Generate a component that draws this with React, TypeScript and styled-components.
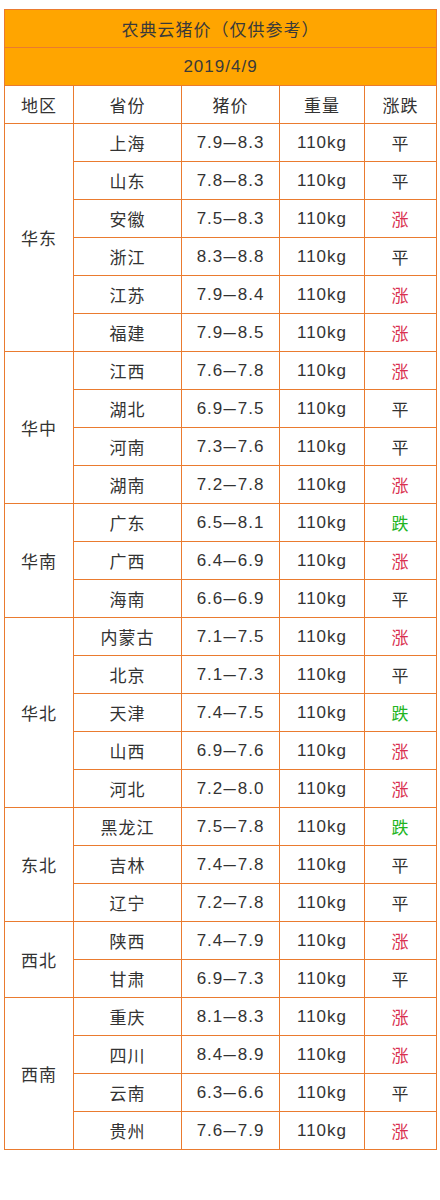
import React from "react";
import styled, { createGlobalStyle } from "styled-components";

const GlobalStyle = createGlobalStyle`
  html, body {
    margin: 0;
    padding: 0;
    background: #ffffff;
  }
  body {
    font-family: "Liberation Sans", "Noto Sans CJK SC", sans-serif;
    color: #333333;
  }
`;

const Page = styled.div`
  padding: 9px 4px 40px 4px;
`;

const PriceTable = styled.table`
  width: 432px;
  table-layout: fixed;
  border-collapse: collapse;
  border: 1px solid #ea7b2f;
  font-size: 17px;
  letter-spacing: 1px;
`;

const TitleCell = styled.td`
  height: 37px;
  padding: 0;
  text-align: center;
  background: #ffa500;
  border: 1px solid #ea7b2f;
  color: #3a3a3a;
`;

const HeadCell = styled.td`
  height: 37px;
  padding: 0;
  text-align: center;
  border: 1px solid #ea7b2f;
`;

const Cell = styled.td`
  height: 37px;
  padding: 0;
  text-align: center;
  border: 1px solid #ea7b2f;
`;

const Dash = styled.span`
  display: inline-block;
  margin: 0 2px;
  transform: scaleX(1.3);
`;

const Trend = styled(Cell)<{ tone: string }>`
  color: ${(p) => (p.tone === "涨" ? "#d9304f" : p.tone === "跌" ? "#22b51f" : "#333333")};
`;

type Row = [string, string, string];

const regions: { name: string; rows: Row[] }[] = [
  {
    name: "华东",
    rows: [
      ["上海", "7.9–8.3", "平"],
      ["山东", "7.8–8.3", "平"],
      ["安徽", "7.5–8.3", "涨"],
      ["浙江", "8.3–8.8", "平"],
      ["江苏", "7.9–8.4", "涨"],
      ["福建", "7.9–8.5", "涨"],
    ],
  },
  {
    name: "华中",
    rows: [
      ["江西", "7.6–7.8", "涨"],
      ["湖北", "6.9–7.5", "平"],
      ["河南", "7.3–7.6", "平"],
      ["湖南", "7.2–7.8", "涨"],
    ],
  },
  {
    name: "华南",
    rows: [
      ["广东", "6.5–8.1", "跌"],
      ["广西", "6.4–6.9", "涨"],
      ["海南", "6.6–6.9", "平"],
    ],
  },
  {
    name: "华北",
    rows: [
      ["内蒙古", "7.1–7.5", "涨"],
      ["北京", "7.1–7.3", "平"],
      ["天津", "7.4–7.5", "跌"],
      ["山西", "6.9–7.6", "涨"],
      ["河北", "7.2–8.0", "涨"],
    ],
  },
  {
    name: "东北",
    rows: [
      ["黑龙江", "7.5–7.8", "跌"],
      ["吉林", "7.4–7.8", "平"],
      ["辽宁", "7.2–7.8", "平"],
    ],
  },
  {
    name: "西北",
    rows: [
      ["陕西", "7.4–7.9", "涨"],
      ["甘肃", "6.9–7.3", "平"],
    ],
  },
  {
    name: "西南",
    rows: [
      ["重庆", "8.1–8.3", "涨"],
      ["四川", "8.4–8.9", "涨"],
      ["云南", "6.3–6.6", "平"],
      ["贵州", "7.6–7.9", "涨"],
    ],
  },
];

const Price = ({ range }: { range: string }) => {
  const [lo, hi] = range.split("–");
  return (
    <>
      {lo}
      <Dash>–</Dash>
      {hi}
    </>
  );
};

const App = () => {
  return (
    <Page>
      <GlobalStyle />
      <PriceTable>
        <colgroup>
          <col style={{ width: 69 }} />
          <col style={{ width: 108 }} />
          <col style={{ width: 98 }} />
          <col style={{ width: 85 }} />
          <col style={{ width: 72 }} />
        </colgroup>
        <tbody>
          <tr>
            <TitleCell colSpan={5}>农典云猪价（仅供参考）</TitleCell>
          </tr>
          <tr>
            <TitleCell colSpan={5}>2019/4/9</TitleCell>
          </tr>
          <tr>
            <HeadCell>地区</HeadCell>
            <HeadCell>省份</HeadCell>
            <HeadCell>猪价</HeadCell>
            <HeadCell>重量</HeadCell>
            <HeadCell>涨跌</HeadCell>
          </tr>
          {regions.map((region) =>
            region.rows.map((row, i) => (
              <tr key={region.name + row[0]}>
                {i === 0 && <Cell rowSpan={region.rows.length}>{region.name}</Cell>}
                <Cell>{row[0]}</Cell>
                <Cell>
                  <Price range={row[1]} />
                </Cell>
                <Cell>110kg</Cell>
                <Trend tone={row[2]}>{row[2]}</Trend>
              </tr>
            ))
          )}
        </tbody>
      </PriceTable>
    </Page>
  );
};

export default App;
